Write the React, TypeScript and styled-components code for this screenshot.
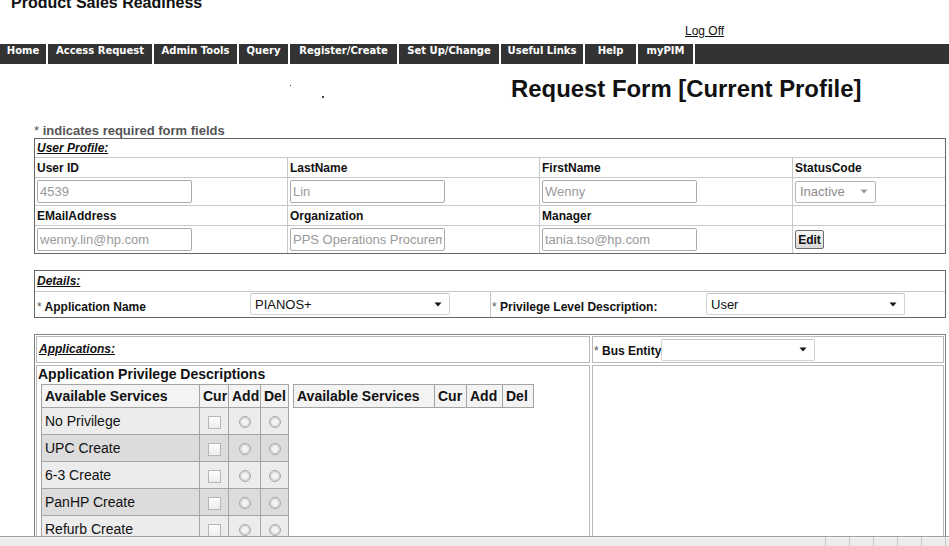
import React from "react";
import styled, { createGlobalStyle } from "styled-components";

const GlobalStyle = createGlobalStyle`
  * { box-sizing: border-box; }
  html, body { margin: 0; padding: 0; background: #fff; }
  body {
    font-family: "Liberation Sans", Arial, sans-serif;
    color: #111;
    overflow: hidden;
  }
`;

const Page = styled.div`
  width: 949px;
  height: 546px;
  overflow: hidden;
`;

const SiteTitle = styled.div`
  height: 22px;
  padding-left: 11px;
  font-size: 16px;
  font-weight: bold;
  line-height: 5px;
  color: #111;
`;

const LogOffRow = styled.div`
  height: 22px;
  padding: 2px 0 0 685px;
  font-size: 12px;
  line-height: 14px;

  a {
    color: #111;
    text-decoration: underline;
  }
`;

const NavBar = styled.nav`
  display: flex;
  gap: 2px;
  height: 20px;
  background: #fff;
`;

const NavItem = styled.div<{ $w?: number }>`
  ${(p) => (p.$w ? `width: ${p.$w}px;` : "flex: 1;")}
  background: #333;
  color: #fff;
  font-family: "DejaVu Sans", Verdana, sans-serif;
  font-size: 10px;
  font-weight: bold;
  line-height: 12px;
  padding-top: 1px;
  text-align: center;
  white-space: nowrap;
`;

const TitleRow = styled.div`
  display: flex;
  height: 28px;
  margin-top: 11px;
`;

const LogoSlot = styled.div`
  width: 511px;
  display: flex;
  align-items: flex-start;
  gap: 31px;
  padding-left: 290px;
`;

const Speck = styled.span<{ $top: number; $size: number }>`
  margin-top: ${(p) => p.$top}px;
  width: ${(p) => p.$size}px;
  height: ${(p) => p.$size}px;
  background: #444;
`;

const PageHeading = styled.h1`
  margin: 0;
  font-size: 23.9px;
  line-height: 28px;
  font-weight: bold;
  color: #111;
  white-space: nowrap;
`;

const RequiredNote = styled.div`
  margin-top: 20px;
  padding-left: 34px;
  font-size: 13px;
  line-height: 15px;
  font-weight: bold;
  color: #555;

  span {
    font-weight: normal;
  }
`;

const ProfilePanel = styled.section`
  margin-left: 34px;
  width: 912px;
  border: 1px solid #666;
  display: grid;
  grid-template-columns: 252px 251px 252px 152px;
  grid-template-rows: 18px 19px 27px 19px 27px;
  gap: 1px;
  background: #c8c8c8;
`;

const DetailsPanel = styled.section`
  margin: 16px 0 0 34px;
  width: 912px;
  border: 1px solid #666;
  display: grid;
  grid-template-columns: 455px 454px;
  grid-template-rows: 20px 25px;
  gap: 1px;
  background: #c8c8c8;
`;

const Cell = styled.div<{ $span?: number; $pad?: number }>`
  grid-column: span ${(p) => p.$span ?? 1};
  background: #fff;
  display: flex;
  align-items: center;
  padding-left: ${(p) => p.$pad ?? 2}px;
  min-width: 0;
`;

const SectionHeading = styled.span`
  font-size: 12px;
  line-height: 14px;
  font-weight: bold;
  font-style: italic;
  text-decoration: underline;
  color: #111;
`;

const FieldLabel = styled.span`
  font-size: 12px;
  line-height: 14px;
  font-weight: bold;
  color: #111;
  white-space: nowrap;

  i {
    font-style: normal;
    font-weight: normal;
    color: #555;
  }
`;

const TextBox = styled.input`
  width: 155px;
  height: 23px;
  margin: 0;
  padding: 0 2px;
  border: 1px solid #ababab;
  border-radius: 2px;
  font-family: "Liberation Sans", Arial, sans-serif;
  font-size: 13px;
  color: #9a9a9a;
  background: #fff;
  outline: none;
`;

const SelectBox = styled.div<{ $w: number; $muted?: boolean }>`
  width: ${(p) => p.$w}px;
  height: 22px;
  display: flex;
  align-items: center;
  justify-content: space-between;
  padding: 0 7px 0 4px;
  border: 1px solid ${(p) => (p.$muted ? "#b5b5b5" : "#d2d2d2")};
  border-top-color: ${(p) => (p.$muted ? "#b5b5b5" : "#c2c2c2")};
  border-radius: 2px;
  background: #fff;
  font-size: 13px;
  color: ${(p) => (p.$muted ? "#8c8c8c" : "#111")};
  white-space: nowrap;
`;

const EditButton = styled.button`
  width: 29px;
  height: 19px;
  margin: 0;
  padding: 0;
  border: 1px solid #6e6e6e;
  border-radius: 2px;
  background: linear-gradient(#f6f6f6, #d9d9d9);
  font-family: "Liberation Sans", Arial, sans-serif;
  font-size: 12px;
  font-weight: bold;
  color: #111;
`;

const FieldPair = styled.div<{ $label: number }>`
  display: grid;
  grid-template-columns: ${(p) => p.$label}px auto;
  align-items: end;
  align-self: stretch;
  width: 100%;

  & > span {
    padding-bottom: 3px;
  }
  & > div {
    align-self: start;
    margin-top: 1px;
  }
`;

const AppsPanel = styled.section`
  margin: 16px 0 0 34px;
  width: 912px;
  border: 1px solid #808080;
  padding: 1px;
  display: grid;
  grid-template-columns: 554px 352px;
  grid-template-rows: 27px 240px;
  gap: 2px;
`;

const AppsCell = styled.div`
  border: 1px solid #b9b9b9;
  display: flex;
  flex-direction: column;
  align-items: flex-start;
  padding-left: 1px;
  min-width: 0;
`;

const AppsTop = styled.div`
  padding: 2px 0 0 1px;
`;

const BusRow = styled.div`
  display: flex;
  align-items: center;
  height: 100%;

  & > span {
    width: 67px;
    padding-top: 3px;
  }
`;

const PrivHeading = styled.div`
  font-size: 14px;
  line-height: 16px;
  font-weight: bold;
  color: #111;
`;

const ServiceTables = styled.div`
  display: flex;
  align-items: flex-start;
  gap: 4px;
  margin: 2px 0 0 3px;
`;

const ServiceTable = styled.table`
  border-collapse: collapse;
  table-layout: fixed;

  th,
  td {
    border: 1px solid #a4a4a4;
    padding: 0 0 0 3px;
    font-size: 14px;
    color: #111;
    text-align: left;
    white-space: nowrap;
  }
  th {
    height: 23px;
    background: #f3f3f3;
    font-weight: bold;
  }
  td {
    height: 27px;
  }
  tbody tr:nth-child(odd) td {
    background: #ececec;
  }
  tbody tr:nth-child(even) td {
    background: #dcdcdc;
  }
  td.mark {
    padding: 0;
    text-align: center;
  }
`;

const CheckMark = styled.span`
  display: inline-block;
  vertical-align: middle;
  width: 13px;
  height: 13px;
  border: 1px solid #b6b6b6;
  background: linear-gradient(#fdfdfd, #ededed);
`;

const RadioMark = styled.span`
  display: inline-block;
  vertical-align: middle;
  width: 12px;
  height: 12px;
  border: 1px solid #a9a9a9;
  border-radius: 50%;
  background: radial-gradient(circle, #f4f4f4 0 35%, #d6d6d6 60%, #e6e6e6 100%);
`;

const StatusBar = styled.footer`
  position: fixed;
  left: 0;
  right: 0;
  bottom: 0;
  height: 10px;
  display: flex;
  justify-content: flex-end;
  padding-right: 3px;
  border-top: 1px solid #9d9d9d;
  background: #ececec;
  box-shadow: inset 0 1px 0 #fafafa;
`;

const StatusPane = styled.div<{ $last?: boolean }>`
  width: ${(p) => (p.$last ? 25 : 24)}px;
  border-left: 1px solid #c6c6c6;
  ${(p) => (p.$last ? "border-right: 1px solid #c6c6c6;" : "")}
`;

function Caret({ muted }: { muted?: boolean }) {
  return (
    <svg width="8" height="5" viewBox="0 0 8 5">
      <path d="M0.5 0.5 L7.5 0.5 L4 4.5 Z" fill={muted ? "#9a9a9a" : "#111"} />
    </svg>
  );
}

function FakeSelect({ width, value, muted }: { width: number; value: string; muted?: boolean }) {
  return (
    <SelectBox $w={width} $muted={muted}>
      <span>{value}</span>
      <Caret muted={muted} />
    </SelectBox>
  );
}

const navLinks: [string, number?][] = [
  ["Home", 46],
  ["Access Request", 104],
  ["Admin Tools", 83],
  ["Query", 49],
  ["Register/Create", 107],
  ["Set Up/Change", 100],
  ["Useful Links", 82],
  ["Help", 51],
  ["myPIM", 55],
  [""],
];

const services = ["No Privilege", "UPC Create", "6-3 Create", "PanHP Create", "Refurb Create", "Refurb Edit"];

export default function App() {
  return (
    <Page>
      <GlobalStyle />
      <SiteTitle>Product Sales Readiness</SiteTitle>
      <LogOffRow>
        <a href="#logoff">Log Off</a>
      </LogOffRow>
      <NavBar>
        {navLinks.map(([label, w], i) => (
          <NavItem key={i} $w={w}>
            {label}
          </NavItem>
        ))}
      </NavBar>

      <TitleRow>
        <LogoSlot>
          <Speck $top={10} $size={1} />
          <Speck $top={21} $size={2} />
        </LogoSlot>
        <PageHeading>Request Form [Current Profile]</PageHeading>
      </TitleRow>

      <RequiredNote>
        <span>*</span> indicates required form fields
      </RequiredNote>

      <ProfilePanel>
        <Cell $span={4}>
          <SectionHeading>User Profile:</SectionHeading>
        </Cell>
        <Cell><FieldLabel>User ID</FieldLabel></Cell>
        <Cell><FieldLabel>LastName</FieldLabel></Cell>
        <Cell><FieldLabel>FirstName</FieldLabel></Cell>
        <Cell><FieldLabel>StatusCode</FieldLabel></Cell>
        <Cell><TextBox readOnly defaultValue="4539" /></Cell>
        <Cell><TextBox readOnly defaultValue="Lin" /></Cell>
        <Cell><TextBox readOnly defaultValue="Wenny" /></Cell>
        <Cell><FakeSelect width={81} value="Inactive" muted /></Cell>
        <Cell><FieldLabel>EMailAddress</FieldLabel></Cell>
        <Cell><FieldLabel>Organization</FieldLabel></Cell>
        <Cell><FieldLabel>Manager</FieldLabel></Cell>
        <Cell />
        <Cell><TextBox readOnly defaultValue="wenny.lin@hp.com" /></Cell>
        <Cell><TextBox readOnly defaultValue="PPS Operations Procurement" /></Cell>
        <Cell><TextBox readOnly defaultValue="tania.tso@hp.com" /></Cell>
        <Cell><EditButton>Edit</EditButton></Cell>
      </ProfilePanel>

      <DetailsPanel>
        <Cell $span={2}>
          <SectionHeading>Details:</SectionHeading>
        </Cell>
        <Cell>
          <FieldPair $label={213}>
            <FieldLabel><i>*</i> Application Name</FieldLabel>
            <FakeSelect width={200} value="PIANOS+" />
          </FieldPair>
        </Cell>
        <Cell $pad={1}>
          <FieldPair $label={214}>
            <FieldLabel><i>*</i> Privilege Level Description:</FieldLabel>
            <FakeSelect width={199} value="User" />
          </FieldPair>
        </Cell>
      </DetailsPanel>

      <AppsPanel>
        <AppsCell>
          <AppsTop>
            <SectionHeading>Applications:</SectionHeading>
          </AppsTop>
        </AppsCell>
        <AppsCell>
          <BusRow>
            <FieldLabel><i>*</i> Bus Entity</FieldLabel>
            <FakeSelect width={154} value="" />
          </BusRow>
        </AppsCell>
        <AppsCell>
          <PrivHeading>Application Privilege Descriptions</PrivHeading>
          <ServiceTables>
            <ServiceTable>
              <colgroup>
                <col style={{ width: 158 }} />
                <col style={{ width: 29 }} />
                <col style={{ width: 32 }} />
                <col style={{ width: 28 }} />
              </colgroup>
              <thead>
                <tr>
                  <th>Available Services</th>
                  <th>Cur</th>
                  <th>Add</th>
                  <th>Del</th>
                </tr>
              </thead>
              <tbody>
                {services.map((s) => (
                  <tr key={s}>
                    <td>{s}</td>
                    <td className="mark"><CheckMark /></td>
                    <td className="mark"><RadioMark /></td>
                    <td className="mark"><RadioMark /></td>
                  </tr>
                ))}
              </tbody>
            </ServiceTable>
            <ServiceTable>
              <colgroup>
                <col style={{ width: 141 }} />
                <col style={{ width: 32 }} />
                <col style={{ width: 36 }} />
                <col style={{ width: 31 }} />
              </colgroup>
              <thead>
                <tr>
                  <th>Available Services</th>
                  <th>Cur</th>
                  <th>Add</th>
                  <th>Del</th>
                </tr>
              </thead>
            </ServiceTable>
          </ServiceTables>
        </AppsCell>
        <AppsCell />
      </AppsPanel>

      <StatusBar>
        <StatusPane />
        <StatusPane />
        <StatusPane />
        <StatusPane />
        <StatusPane $last />
      </StatusBar>
    </Page>
  );
}
